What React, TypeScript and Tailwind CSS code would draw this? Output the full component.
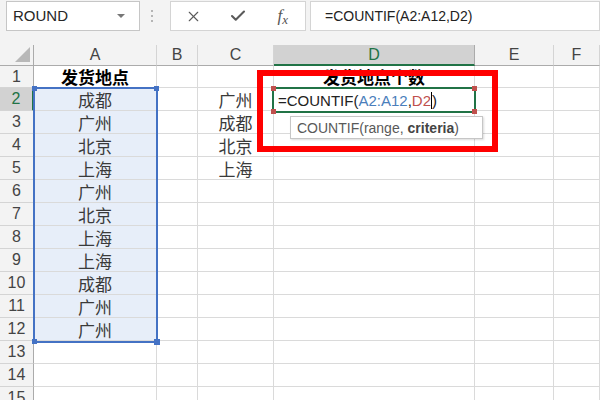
import React from 'react';
import { X, Check } from 'lucide-react';

const colW = ['w-[123px]', 'w-[41px]', 'w-[76px]', 'w-[201px]', 'w-[79px]', 'flex-1'];
const letters = ['A', 'B', 'C', 'D', 'E', 'F'];

const colA = ['发货地点', '成都', '广州', '北京', '上海', '广州', '北京', '上海', '上海', '成都', '广州', '广州'];
const colC = ['', '广州', '成都', '北京', '上海'];

const cjk = { fontFamily: '"Noto Sans CJK SC", "Noto Sans", sans-serif' };
const latin = { fontFamily: '"Liberation Sans", Arial, sans-serif' };

function Handle({ className }: { className: string }) {
  return <div className={`absolute h-[5px] w-[5px] ${className}`} />;
}

export default function App() {
  const rows = Array.from({ length: 15 }, (_, i) => i + 1);

  return (
    <div className="relative h-[400px] w-[600px] overflow-hidden bg-[#f3f3f3]" style={latin}>
      {/* formula bar */}
      <div className="flex h-[45px] items-start pt-[1px]">
        <div className="relative ml-[6px] flex h-[30px] w-[134px] items-center border border-[#c6c6c6] bg-white pl-[6px] text-[15px] text-[#262626]">
          ROUND
          <div className="absolute right-[14px] top-[12px] h-0 w-0 border-x-[4px] border-t-[4px] border-x-transparent border-t-[#777]" />
        </div>
        <div className="flex h-[30px] w-[30px] flex-col items-start justify-center gap-[3px] pl-[11px]">
          <div className="h-[2px] w-[2px] rounded-full bg-[#a0a0a0]" />
          <div className="h-[2px] w-[2px] rounded-full bg-[#a0a0a0]" />
          <div className="h-[2px] w-[2px] rounded-full bg-[#a0a0a0]" />
        </div>
        <div className="flex h-[30px] w-[136px] items-center border border-[#d4d4d4] bg-white">
          <div className="flex w-[45px] justify-center text-[#5a5a5a]">
            <X size={17} strokeWidth={1.6} />
          </div>
          <div className="flex w-[45px] justify-center text-[#5a5a5a]">
            <Check size={18} strokeWidth={2.8} />
          </div>
          <div
            className="flex w-[45px] justify-center text-[17px] italic text-[#555]"
            style={{ fontFamily: '"Liberation Serif", "Times New Roman", serif' }}
          >
            f<span className="mb-[3px] self-end text-[13px] leading-none">x</span>
          </div>
        </div>
        <div className="ml-[4px] flex h-[30px] flex-1 items-center border border-[#d4d4d4] bg-white pl-[14px] text-[14px] text-[#222]">
          =COUNTIF(A2:A12,D2)
        </div>
      </div>

      {/* column header */}
      <div className="flex h-[21px] bg-[#f3f3f3] text-[16px] leading-none text-[#444]">
        <div className="relative w-[34px] border-b border-r border-[#ababab]">
          <div className="absolute bottom-[3px] right-[3px] h-0 w-0 border-b-[15px] border-l-[15px] border-b-[#b8b8b8] border-l-transparent" />
        </div>
        {letters.map((l, i) => (
          <div
            key={l}
            className={`${colW[i]} flex items-center justify-center border-r ${
              l === 'D'
                ? 'border-b-2 border-r-[#ababab] border-b-[#217346] bg-[#d2d2d2] text-[#217346]'
                : 'border-b border-r-[#d4d4d4] border-b-[#ababab]'
            }`}
          >
            {l}
          </div>
        ))}
      </div>

      {/* grid body */}
      <div className="bg-white">
        {rows.map((r) => (
          <div key={r} className={`flex ${r === 1 ? 'h-[22px]' : 'h-[23px]'}`}>
            <div
              className={`flex w-[34px] items-center justify-center border-b border-[#d4d4d4] text-[16px] leading-none ${
                r === 2
                  ? 'border-r-2 border-r-[#217346] bg-[#d2d2d2] text-[#217346]'
                  : 'border-r border-r-[#ababab] bg-[#f3f3f3] text-[#444]'
              }`}
            >
              {r}
            </div>
            {letters.map((l, i) => {
              let text = '';
              let bold = false;
              let bg = '';
              if (l === 'A' && r <= 12) {
                text = colA[r - 1];
                bold = r === 1;
                if (r > 1) bg = 'bg-[#e7eef9]';
              }
              if (l === 'C' && r >= 2 && r <= 5) text = colC[r - 1];
              if (l === 'D' && r === 1) {
                text = '发货地点个数';
                bold = true;
              }
              return (
                <div
                  key={l}
                  className={`${colW[i]} ${bg} flex items-center justify-center whitespace-nowrap border-b border-r border-[#dadada] text-[17px] leading-none ${
                    bold ? 'font-bold text-black' : 'text-[#3a3a3a]'
                  }`}
                  style={cjk}
                >
                  {text}
                </div>
              );
            })}
          </div>
        ))}
      </div>

      {/* range A2:A12 */}
      <div className="absolute left-[33px] top-[87px] h-[256px] w-[125px] border-2 border-[#4472c4]">
        <Handle className="-left-[3px] -top-[3px] bg-[#4472c4]" />
        <Handle className="-right-[3px] -top-[3px] bg-[#4472c4]" />
        <Handle className="-bottom-[3px] -left-[3px] bg-[#4472c4]" />
        <Handle className="-bottom-[4px] -right-[4px] h-[6px] w-[6px] bg-[#4472c4]" />
      </div>

      {/* active cell D2 with formula */}
      <div className="absolute left-[272px] top-[87px] flex h-[26px] w-[204px] items-center border-2 border-[#217346] bg-white pl-[4px] text-[15px] leading-none text-[#222]">
        <span>=COUNTIF(</span>
        <span className="text-[#4a7ebb]">A2:A12</span>
        <span>,</span>
        <span className="text-[#c0504d]">D2</span>
        <span className="h-[17px] w-[1px] bg-black" />
        <span>)</span>
        <Handle className="-left-[3px] -top-[3px] bg-[#c0504d]" />
        <Handle className="-right-[3px] -top-[3px] bg-[#c0504d]" />
        <Handle className="-bottom-[3px] -left-[3px] bg-[#c0504d]" />
        <Handle className="-bottom-[3px] -right-[3px] bg-[#c0504d]" />
      </div>

      {/* tooltip */}
      <div className="absolute left-[290px] top-[116px] flex h-[23px] w-[193px] items-center border border-[#c6c6c6] bg-white pl-[6px] text-[14px] leading-none text-[#595959] shadow-[1px_1px_2px_rgba(0,0,0,0.15)]">
        COUNTIF(range, <span className="ml-[4px] font-bold text-[#444]">criteria</span>)
      </div>

      {/* red annotation box */}
      <div className="absolute left-[257px] top-[70px] h-[82px] w-[241px] border-[6px] border-[#ff0000]" />
    </div>
  );
}
